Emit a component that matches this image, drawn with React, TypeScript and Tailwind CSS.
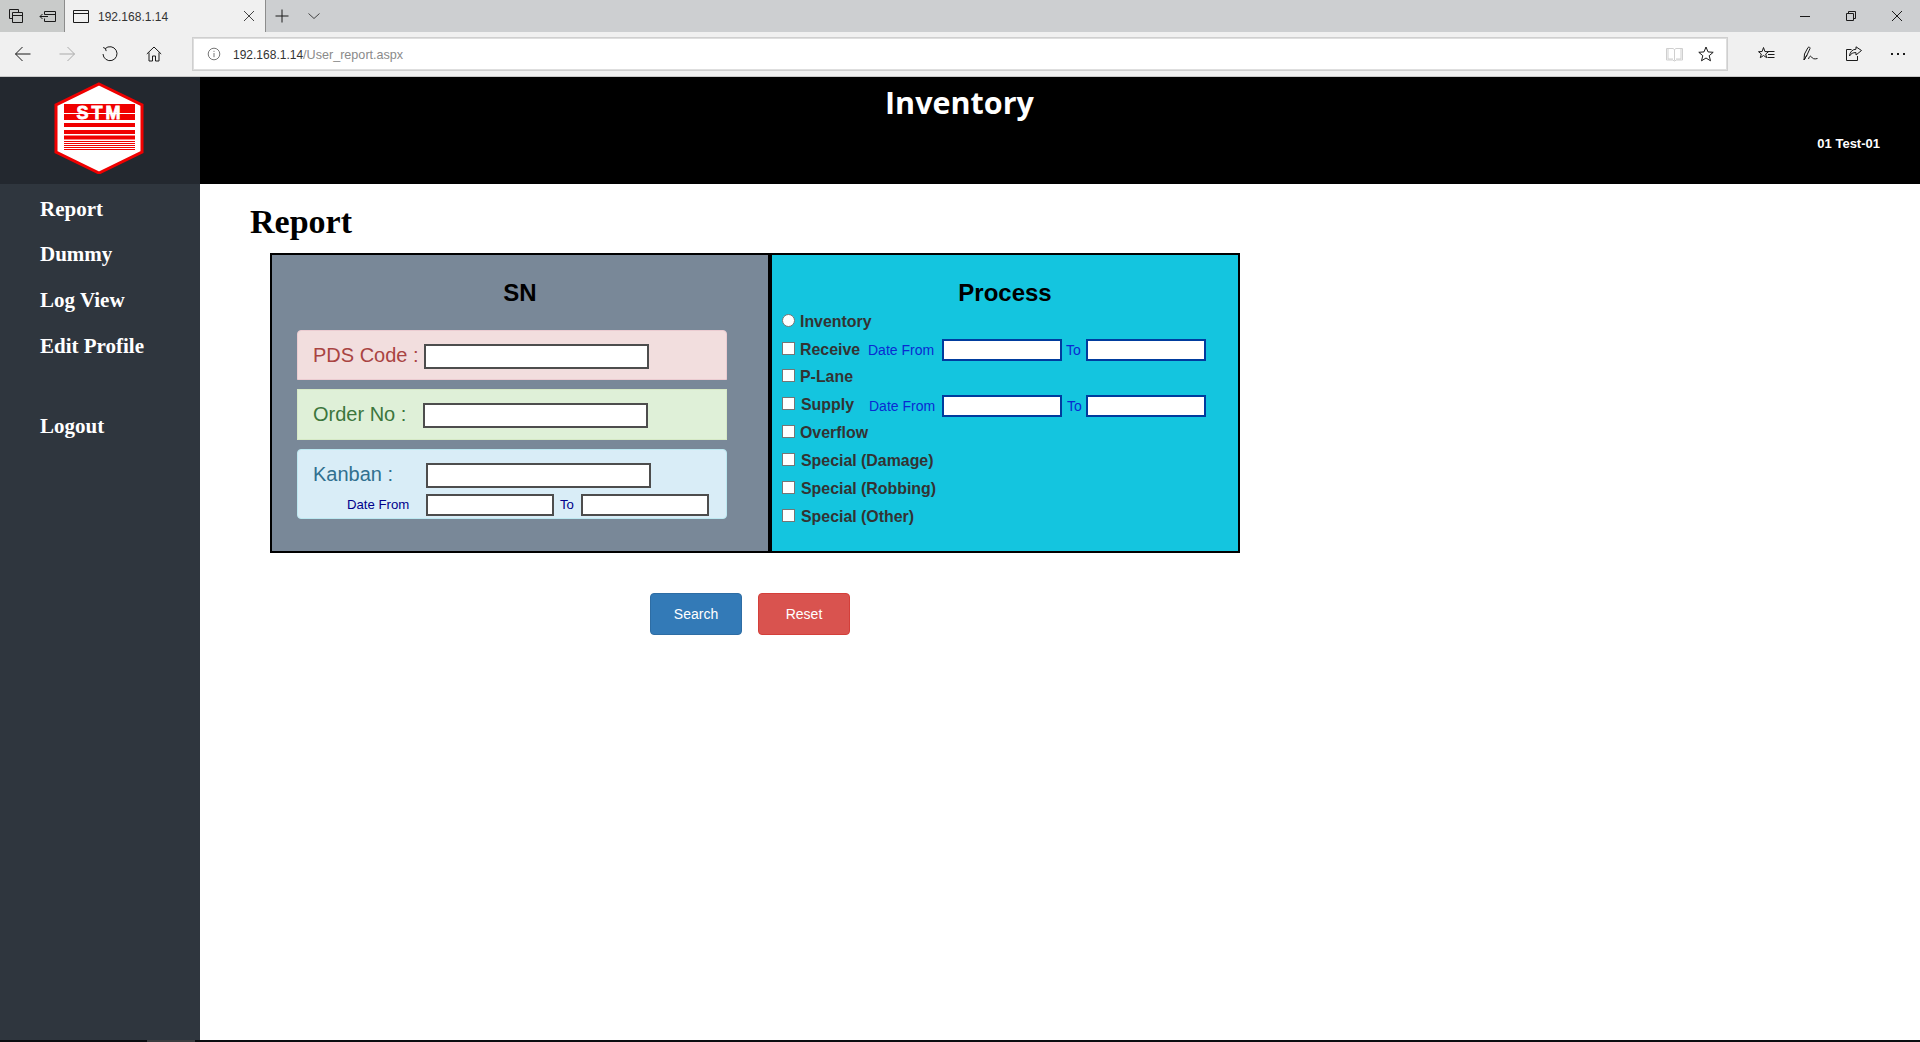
import React from "react";

const sans = "font-['Liberation_Sans',Arial,sans-serif]";

function Ico({ children, w = 16, h = 16 }: { children: React.ReactNode; w?: number; h?: number }) {
  return (
    <svg width={w} height={h} viewBox={`0 0 ${w} ${h}`} fill="none" stroke="currentColor" strokeWidth="1" className="block">
      {children}
    </svg>
  );
}

function Slot({ w, children, className = "" }: { w: string; children?: React.ReactNode; className?: string }) {
  return <div className={`flex items-center justify-center h-full shrink-0 ${w} ${className}`}>{children}</div>;
}

function TabBar() {
  return (
    <div className="flex h-8 shrink-0 bg-[#cdcfd1] text-[#1a1a1a]">
      <div className="flex bg-[#c9cbca]">
        <Slot w="w-8">
          <Ico>
            <path d="M1.500 1.500h9v3M1.500 1.500v9h3M4.500 4.500h10v10h-10zM4.500 7.500h10" />
          </Ico>
        </Slot>
        <Slot w="w-8">
          <Ico w={18}>
            <path d="M5.500 3.500h11v10h-11v-3M5.500 3.500v3M5.500 6.500h11M1 8.500h8M3.500 6l-2.500 2.500 2.500 2.500" />
          </Ico>
        </Slot>
      </div>
      <div className="flex items-center w-[202px] bg-[#f0f0f0] border-x border-[#8c8c8c]">
        <div className="ml-2">
          <Ico>
            <path d="M.5 2.500h15v12H.5zM.5 5.500h15" />
          </Ico>
        </div>
        <span className={`ml-[9px] mt-px text-[12px] text-[#333] ${sans}`}>192.168.1.14</span>
        <div className="ml-auto mr-[9px] text-[#444]">
          <Ico w={14} h={14}>
            <path d="M2 2l10 10M12 2L2 12" />
          </Ico>
        </div>
      </div>
      <Slot w="w-8">
        <Ico w={14} h={14}>
          <path d="M7 .5v13M.5 7h13" />
        </Ico>
      </Slot>
      <Slot w="w-8" className="text-[#444]">
        <Ico w={14} h={14}>
          <path d="M1.500 4.500L7 9.500l5.500-5" />
        </Ico>
      </Slot>
      <div className="ml-auto flex">
        <Slot w="w-[46px]">
          <Ico w={12} h={12}>
            <path d="M1 6.500h10" />
          </Ico>
        </Slot>
        <Slot w="w-[46px]">
          <Ico w={12} h={12}>
            <path d="M1.500 3.500h7v7h-7zM3.500 3.500v-2h7v7h-2" />
          </Ico>
        </Slot>
        <Slot w="w-[46px]">
          <Ico w={12} h={12}>
            <path d="M1 1l10 10M11 1L1 11" />
          </Ico>
        </Slot>
      </div>
    </div>
  );
}

function ToolBar() {
  return (
    <div className="flex h-[45px] shrink-0 bg-[#f0f0f0] border-b border-[#c9c9c9] text-[#1a1a1a]">
      <Slot w="w-11" className="pl-px">
        <Ico>
          <path d="M.5 8h15M7.500 1L.5 8l7 7" />
        </Ico>
      </Slot>
      <Slot w="w-11" className="text-[#aaaaaa] pl-px">
        <Ico>
          <path d="M.5 8h15M8.500 1l7 7-7 7" />
        </Ico>
      </Slot>
      <Slot w="w-11">
        <Ico>
          <path d="M3.200 2.600A7 7 0 1 1 1 8M1.200 1.500l2.200 1 .8 2.600" />
        </Ico>
      </Slot>
      <Slot w="w-11">
        <Ico>
          <path d="M.8 8L8 1l7.200 7M3 6.500v8.500h3.500v-5h3v5H13V6.500" />
        </Ico>
      </Slot>
      <div className="flex items-center ml-4 mt-[5px] h-[34px] w-[1536px] bg-white border border-[#cfcfcf] outline outline-1 outline-offset-[-2px] outline-[#dedede]">
        <div className="ml-[14px] text-[#777]">
          <Ico w={14} h={14}>
            <circle cx="7" cy="7" r="5.800" />
            <path d="M7 6v4.200M7 3.800v1.100" />
          </Ico>
        </div>
        <span className={`ml-[12px] mt-[2px] text-[12px] text-[#333] ${sans}`}>
          192.168.1.14<span className="text-[12.600px] text-[#8a8a8a]">/User_report.aspx</span>
        </span>
        <div className="ml-auto flex items-center h-full mr-[13px]">
          <div className="text-[#cfcfcf] mr-[15px]">
            <Ico w={17} h={16}>
              <path d="M.5 2.500h6.500l1.500 1 1.500-1h6.500v11.500h-6l-2 1-2-1h-6zM8.500 3.500v11" />
              <path d="M2 3v10h5M15 3v10h-5" />
            </Ico>
          </div>
          <Ico>
            <path d="M8 1l2 4.900 5.200.4-4 3.400 1.300 5.100L8 12l-4.500 2.800 1.300-5.100-4-3.400 5.200-.4z" />
          </Ico>
        </div>
      </div>
      <div className="flex ml-auto">
        <Slot w="w-11">
          <Ico w={18}>
            <path d="M6.500 1.500l1.400 4 3.600.2-2.800 2.300 1 3.700-3.200-2.200-3.200 2.200 1-3.700L1.500 5.700l3.600-.2z" />
            <path d="M10.500 5.500h7M11 8.500h6.500M10.500 11.500h7" />
          </Ico>
        </Slot>
        <Slot w="w-11">
          <Ico w={17}>
            <path d="M2 14L2.500 8 6 1.500c1-.9 2.300-.2 2 1L5 9z M2 14l3-5M6.500 13c1-3 2-3.500 3-2s2.500 2.500 6 1.500" />
          </Ico>
        </Slot>
        <Slot w="w-11">
          <Ico>
            <path d="M5.500 3.500H.5v11h11V10M15.500 4.500L10 .8v2.400C6 3.500 4 6 3.500 10c1.500-2.500 3.500-3.500 6.500-3.400v2.400z" />
          </Ico>
        </Slot>
        <Slot w="w-11">
          <svg width="14" height="2" viewBox="0 0 14 2" className="block" fill="currentColor">
            <rect x="0" y="0" width="2" height="2" />
            <rect x="6" y="0" width="2" height="2" />
            <rect x="12" y="0" width="2" height="2" />
          </svg>
        </Slot>
      </div>
    </div>
  );
}

function Logo() {
  return (
    <svg width="92" height="92" viewBox="0 0 92 92" className="block ml-[54px] mt-[5px]">
      <polygon points="45,2 88,23 88,70 45,91 2,70 2,23" fill="#fff" stroke="#f00000" strokeWidth="3" />
      <g fill="#f00000">
        <rect x="10" y="22" width="71" height="9" />
        <rect x="10" y="32" width="71" height="6" />
        <rect x="10" y="41" width="71" height="4" />
        <rect x="10" y="48" width="71" height="4" />
        <rect x="10" y="53.500" width="71" height="4" />
        <rect x="10" y="59" width="71" height="1" />
        <rect x="10" y="61" width="71" height="1" />
        <rect x="10" y="63" width="71" height="1" />
        <rect x="10" y="65" width="71" height="1" />
        <rect x="10" y="67" width="71" height="1" />
      </g>
      <text x="46" y="37" textAnchor="middle" fill="#fff" stroke="#fff" strokeWidth="0.800" fontSize="18" fontWeight="700" letterSpacing="3" fontFamily="'Liberation Sans', Arial, sans-serif">
        STM
      </text>
    </svg>
  );
}

function Sidebar() {
  return (
    <aside className="w-[200px] shrink-0 flex flex-col bg-[#2f363e]">
      <div className="h-[107px] bg-[#23282f]">
        <Logo />
      </div>
      <nav className="font-['Liberation_Serif',serif] font-bold text-[21px] text-white pl-10 pt-[3px]">
        <div className="h-[45px] flex items-center">Report</div>
        <div className="h-[46px] flex items-center">Dummy</div>
        <div className="h-[46px] flex items-center">Log View</div>
        <div className="h-[46px] flex items-center">Edit Profile</div>
        <div className="h-[46px] flex items-center mt-[34px]">Logout</div>
      </nav>
    </aside>
  );
}

function Header() {
  return (
    <header className="h-[107px] shrink-0 bg-black text-white flex justify-between items-start">
      <div className="ml-[685px] mt-[3px] text-[30.500px] leading-[44px] font-bold font-['Comic_Sans_MS','Open_Sans',sans-serif]">
        Inventory
      </div>
      <div className={`mr-[40px] mt-[59px] text-[13px] leading-4 font-bold ${sans}`}>01 Test-01</div>
    </header>
  );
}

const boxInput = "block h-[25px] w-[225px] border-2 border-[#4d4d4d] bg-white";
const smallInput = "block h-[22px] w-[128px] border-2 border-[#4d4d4d] bg-white";
const blueInput = "block h-[22px] w-[120px] border-2 border-[#003c9e] bg-white";

function SnPanel() {
  return (
    <section className="w-[496px] shrink-0 bg-[#798898]">
      <h3 className="h-[75px] flex items-center justify-center text-[24px] font-bold text-black">SN</h3>
      <div className="w-[430px] ml-[25px] flex flex-col gap-[9px] text-[20px]">
        <div className="h-[50px] pt-[13px] pl-[15px] bg-[#f2dede] border border-[#ebccd1] rounded-t-[4px] text-[#a94442]">
          <div className="flex items-center h-[25px]">
            <label className="w-[111px] shrink-0 -mt-[3px]">PDS Code :</label>
            <input className={boxInput} />
          </div>
        </div>
        <div className="h-[51px] pt-[13px] pl-[15px] bg-[#dff0d8] border border-[#d6e9c6] text-[#3c763d]">
          <div className="flex items-center h-[25px]">
            <label className="w-[110px] shrink-0 -mt-[3px]">Order No :</label>
            <input className={boxInput} />
          </div>
        </div>
        <div className="h-[70px] pt-[13px] pl-[15px] bg-[#d9edf7] border border-[#bce8f1] rounded-[4px] text-[#31708f]">
          <div className="flex items-center h-[25px]">
            <label className="w-[113px] shrink-0 -mt-[3px]">Kanban :</label>
            <input className={boxInput} />
          </div>
          <div className="flex items-center h-[22px] mt-[6px] text-[13.200px] text-[#00008b]">
            <span className="w-[113px] shrink-0 pl-[34px]">Date From</span>
            <input className={smallInput} />
            <span className="ml-[6px] w-[21px] shrink-0">To</span>
            <input className={smallInput} />
          </div>
        </div>
      </div>
    </section>
  );
}

function Dates({ shift }: { shift?: boolean }) {
  return (
    <div className={`flex items-center text-[14px] font-normal text-[#0a2ad2] ${shift ? "mt-[4px]" : "mt-[2px]"}`}>
      <span className={shift ? "w-[73px] ml-px shrink-0" : "w-[74px] shrink-0"}>Date From</span>
      <input className={blueInput} />
      <span className={shift ? "w-[19px] ml-[5px] shrink-0" : "w-[20px] ml-[4px] shrink-0"}>To</span>
      <input className={blueInput} />
    </div>
  );
}

function Row({ label, radio, shift, dates, up }: { label: string; radio?: boolean; shift?: boolean; dates?: boolean; up?: boolean }) {
  return (
    <div className={`h-[28px] flex items-center ${up ? "-mt-px" : ""}`}>
      <input
        type={radio ? "radio" : "checkbox"}
        name={radio ? "proc" : undefined}
        className={`appearance-none block w-[13px] h-[13px] shrink-0 bg-white border border-[#767676] -mt-px ${radio ? "rounded-full" : ""}`}
      />
      <label className={`${shift ? "ml-[6px]" : "ml-[5px]"} ${dates ? (shift ? "w-[67px]" : "w-[68px]") : ""} mt-[2px] shrink-0 text-[15.900px] font-bold text-[#333]`}>
        {label}
      </label>
      {dates && <Dates shift={shift} />}
    </div>
  );
}

function ProcessPanel() {
  return (
    <section className="flex-1 bg-[#14c5df] border-l-4 border-black">
      <h3 className="h-[52px] pt-[24px] flex items-center justify-center text-[24px] font-bold text-black">Process</h3>
      <div className="pl-[10px]">
        <Row label="Inventory" radio />
        <Row label="Receive" dates />
        <Row label="P-Lane" up />
        <Row label="Supply" shift dates />
        <Row label="Overflow" />
        <Row label="Special (Damage)" shift />
        <Row label="Special (Robbing)" shift />
        <Row label="Special (Other)" shift />
      </div>
    </section>
  );
}

export default function App() {
  return (
    <div className={`w-[1920px] h-[1042px] flex flex-col overflow-hidden bg-white ${sans}`}>
      <TabBar />
      <ToolBar />
      <div className="flex flex-1 min-h-0">
        <Sidebar />
        <div className="flex-1 flex flex-col min-w-0">
          <Header />
          <main className="flex-1">
            <h2 className="h-[69px] pt-[21px] pl-[50px] font-['Liberation_Serif',serif] font-bold text-[34px] leading-[34px] text-black">
              Report
            </h2>
            <div className="ml-[70px] w-[970px] h-[300px] border-2 border-black flex">
              <SnPanel />
              <ProcessPanel />
            </div>
            <div className="ml-[450px] mt-10 flex gap-4">
              <button className="w-[92px] h-[42px] rounded-[4px] bg-[#337ab7] border border-[#2e6da4] text-white text-[14px]">Search</button>
              <button className="w-[92px] h-[42px] rounded-[4px] bg-[#d9534f] border border-[#d43f3a] text-white text-[14px]">Reset</button>
            </div>
          </main>
        </div>
      </div>
      <div className="h-[2px] shrink-0 bg-[#0a0d10] flex">
        <div className="ml-[147px] w-[48px] bg-[#3b3d40]" />
      </div>
    </div>
  );
}
